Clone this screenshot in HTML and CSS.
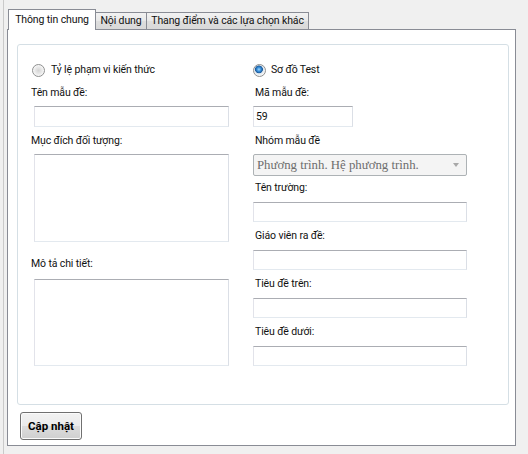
FILE: index.html
```html
<!DOCTYPE html>
<html lang="vi">
<head>
<meta charset="utf-8">
<link rel="stylesheet" href="styles.css">
</head>
<body>
<div class="app">
  <div class="tabs">
    <div class="tab active tab-w1">Thông tin chung</div>
    <div class="tab tab-w2">Nội dung</div>
    <div class="tab tab-w3">Thang điểm và các lựa chọn khác</div>
  </div>
  <div class="panel">
    <div class="group">
      <div class="col col-left">
        <div class="radio-row"><span class="radio"></span><span>Tỷ lệ phạm vi kiến thức</span></div>
        <div class="label">Tên mẫu đề:</div>
        <div class="input input-full"></div>
        <div class="label">Mục đích đối tượng:</div>
        <div class="input textarea ta1"></div>
        <div class="label label-gap">Mô tả chi tiết:</div>
        <div class="input textarea ta2"></div>
      </div>
      <div class="col col-right">
        <div class="radio-row"><span class="radio checked"></span><span>Sơ đồ Test</span></div>
        <div class="label">Mã mẫu đề:</div>
        <div class="input input-code">59</div>
        <div class="label">Nhóm mẫu đề</div>
        <div class="select"><span class="select-text">Phương trình. Hệ phương trình.</span><span class="arrow"></span></div>
        <div class="label label-tight">Tên trường:</div>
        <div class="input input-field"></div>
        <div class="label">Giáo viên ra đề:</div>
        <div class="input input-field"></div>
        <div class="label">Tiêu đề trên:</div>
        <div class="input input-field"></div>
        <div class="label">Tiêu đề dưới:</div>
        <div class="input input-field"></div>
      </div>
    </div>
    <button class="btn">Cập nhật</button>
  </div>
</div>
</body>
</html>
```

FILE: styles.css
```css
* { box-sizing: border-box; }

html, body {
  margin: 0;
  padding: 0;
  background: #f0f0f0;
}

body {
  font-family: Roboto, "Liberation Sans", sans-serif;
  font-size: 10.5px;
  letter-spacing: -0.12px;
  color: #111;
  width: 528px;
  height: 454px;
  overflow: hidden;
}

.app {
  margin-left: 3px;
  border-left: 1px solid #cacaca;
  padding: 9px 0 0 3px;
  height: 454px;
}

.tabs {
  display: flex;
  align-items: flex-end;
  height: 21px;
  margin-bottom: -1px;
  padding-left: 1px;
  position: relative;
  z-index: 1;
}

.tab {
  height: 17px;
  margin-bottom: 1px;
  border: 1px solid #898c95;
  border-bottom: none;
  border-left: none;
  background: linear-gradient(#f2f2f2, #e8e8e8 50%, #dedede 51%, #d9d9d9);
  line-height: 15px;
  white-space: nowrap;
  text-align: center;
}

.tab.active {
  height: 21px;
  margin-bottom: 0;
  border-left: 1px solid #898c95;
  border-right: 1px solid #898c95;
  background: #fff;
  line-height: 19px;
}

.tab-w1 { width: 88px; }
.tab-w2 { width: 51px; }
.tab-w3 { width: 162px; }

.panel {
  width: 509px;
  height: 417px;
  border: 1px solid #898c95;
  background: #fff;
  padding: 14px 6px 0 9px;
}

.group {
  width: 492px;
  height: 361px;
  border: 1px solid #d5dfe5;
  border-radius: 3px;
  padding: 17px 0 0 13px;
  display: flex;
  gap: 24px;
}

.col {
  display: flex;
  flex-direction: column;
}

.col-left { width: 198px; }
.col-right { width: 214px; }

.radio-row {
  display: flex;
  align-items: center;
  gap: 5px;
  height: 16px;
  line-height: 16px;
}

.col-left .radio-row { padding-left: 1px; gap: 6px; }

.radio {
  width: 13px;
  height: 13px;
  border-radius: 50%;
  border: 1px solid #8e8f8f;
  background: radial-gradient(circle at 50% 50%, #d4d4d4 0, #e6e6e6 3px, #f4f4f4 5px, #fcfcfc 6px);
  flex: none;
}

.radio.checked {
  background: radial-gradient(circle at 45% 40%, #9fd9ff 0, #3a8fd9 2px, #1a5a9c 3.6px, #dde6ee 4.2px, #f5f5f5 6px);
}

.label {
  height: 16px;
  line-height: 16px;
  margin-top: 7px;
  white-space: nowrap;
}

.col-right .label { padding-left: 2px; }

.radio-row + .label { margin-top: 7px; }
.input + .label { margin-top: 6px; }
.label-gap { margin-top: 14px !important; }
.label-tight { margin-top: 4px !important; }

.input {
  margin-top: 5px;
  height: 21px;
  border: 1px solid;
  border-color: #abadb3 #dbdfe6 #e3e9ef #e2e3ea;
  background: #fff;
  padding: 2px 2px;
  line-height: 15px;
}

.input-full { margin-left: 3px; width: 195px; }
.input-code { width: 100px; }
.input-field { width: 214px; height: 20px; margin-top: 6px; }

.textarea { margin-left: 3px; width: 195px; }
.ta1 { height: 88px; }
.ta2 { height: 87px; margin-top: 7px; }

.select {
  margin-top: 5px;
  width: 214px;
  height: 22px;
  border: 1px solid #adb2b5;
  border-radius: 2px;
  background: #f4f4f4;
  display: flex;
  align-items: center;
  justify-content: space-between;
  padding: 0 7px 0 3px;
}

.select-text {
  font-family: "Liberation Serif", serif;
  font-size: 12.8px;
  letter-spacing: 0;
  color: #6d6d6d;
}

.arrow {
  width: 0;
  height: 0;
  border-left: 3.5px solid transparent;
  border-right: 3.5px solid transparent;
  border-top: 4px solid #a8a8a8;
}

.btn {
  display: block;
  margin: 7px 0 0 3px;
  width: 62px;
  height: 28px;
  border: 1px solid #707070;
  border-radius: 3px;
  background: linear-gradient(#f2f2f2, #ebebeb 50%, #dddddd 51%, #cfcfcf);
  box-shadow: inset 0 0 0 1px #fbfbfb;
  font-family: Roboto, "Liberation Sans", sans-serif;
  font-size: 11.5px;
  font-weight: bold;
  letter-spacing: 0;
  color: #000;
  padding: 0;
}
```
